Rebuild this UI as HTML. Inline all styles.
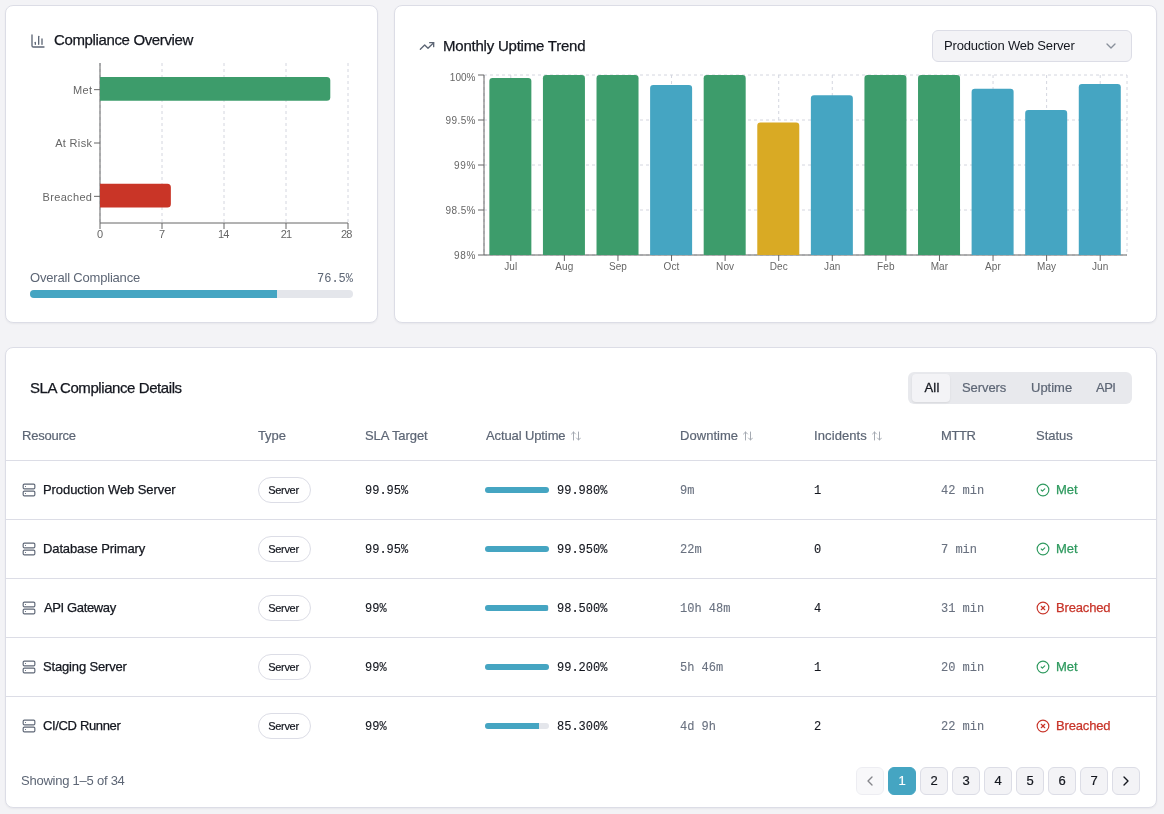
<!DOCTYPE html>
<html lang="en">
<head>
<meta charset="utf-8">
<title>SLA Compliance</title>
<style>
*{box-sizing:border-box;margin:0;padding:0}
html,body{width:1164px;height:814px;overflow:hidden}
body{background:#f3f3f6;font-family:"Liberation Sans",sans-serif;color:#14171f;position:relative}
#root{position:absolute;left:0;top:0;width:1164px;height:814px;will-change:transform}
.mono{font-family:"Liberation Mono",monospace}
.card{position:absolute;background:#fff;border:1px solid #dcdde6;border-radius:8px;box-shadow:0 1px 2px rgba(16,24,40,.05)}
.title{position:absolute;font-size:15px;color:#14171f;white-space:nowrap;line-height:20px;-webkit-text-stroke:.25px #14171f}
svg{position:absolute;overflow:visible}
.tick{font-family:"Liberation Sans",sans-serif;font-size:11px;fill:#666}
.t2{font-size:10px;letter-spacing:.1px}
#c1{left:5px;top:5px;width:373px;height:318px}
#c2{left:394px;top:5px;width:763px;height:318px}
#c3{left:5px;top:347px;width:1152px;height:461px}
.lbl{position:absolute;font-size:13px;color:#5d6675;white-space:nowrap;line-height:16px}
.pbar{position:absolute;height:8px;border-radius:4px;background:#e4e6eb;overflow:hidden}
.pbar i{display:block;height:100%;background:#45a5c2}
.select{position:absolute;left:932px;top:30px;width:200px;height:32px;border:1px solid #dcdde6;border-radius:6px;background:#f3f3f6;font-size:13px;line-height:30px;padding-left:11px;color:#14171f;white-space:nowrap}
.tabs{position:absolute;left:908px;top:372px;width:224px;height:32px;background:#e8e9ed;border-radius:6px}
.tab{position:absolute;top:0;height:32px;line-height:32px;font-size:13px;color:#5d6675;white-space:nowrap;-webkit-text-stroke:.2px #5d6675}
.tab.on{top:2px;height:28px;line-height:28px;background:#f3f3f6;border-radius:4px;color:#14171f;text-align:center;box-shadow:0 1px 2px rgba(0,0,0,.08);-webkit-text-stroke:.3px #14171f}
.th{position:absolute;top:428px;font-size:13px;line-height:16px;color:#5d6675;white-space:nowrap;-webkit-text-stroke:.2px #5d6675}
.hr{position:absolute;left:6px;width:1150px;height:1px;background:#dcdde6}
.row{position:absolute;left:0;width:1164px;height:58px}
.row>*{position:absolute;white-space:nowrap}
.name{left:43px;top:21px;font-size:13px;line-height:16px;color:#14171f;-webkit-text-stroke:.25px #14171f}
.badge{left:258px;top:16px;width:53px;height:26px;border:1px solid #dcdde6;border-radius:13px;font-size:11px;line-height:24px;text-align:center;color:#14171f;background:#fff;padding-right:2px;-webkit-text-stroke:.2px #14171f}
.m{font-family:"Liberation Mono",monospace;font-size:12px;line-height:16px;top:22px;color:#14171f;-webkit-text-stroke:.12px currentColor}
.g{color:#6a7280}
.bar{left:485px;top:26px;width:64px;height:6px;border-radius:3px;background:#e4e6eb;overflow:hidden}
.bar i{display:block;height:100%;background:#45a5c2}
.st{left:1056px;top:21px;font-size:13px;line-height:16px}
.met{color:#2f9a5f;-webkit-text-stroke:.25px #2f9a5f}
.br{color:#c8352a;-webkit-text-stroke:.25px #c8352a}
.pg{position:absolute;top:767px;width:28px;height:28px;border:1px solid #dcdde6;border-radius:6px;background:#f3f3f6;font-size:13px;line-height:26px;text-align:center;color:#14171f;-webkit-text-stroke:.2px #14171f}
.pg.on{background:#45a5c2;border-color:#45a5c2;color:#fff;-webkit-text-stroke:.2px #fff}
.pg.dis{opacity:.5}
</style>
</head>
<body>
<div id="root">
<div class="card" id="c1"></div>
<div class="card" id="c2"></div>
<div class="card" id="c3"></div>
<svg id="charts" width="1164" height="814" viewBox="0 0 1164 814" style="left:0;top:0">
<g stroke="#d4d6df" stroke-dasharray="3 3" fill="none">
<line x1="100.0" y1="63" x2="100.0" y2="223"/>
<line x1="162.0" y1="63" x2="162.0" y2="223"/>
<line x1="224.0" y1="63" x2="224.0" y2="223"/>
<line x1="286.0" y1="63" x2="286.0" y2="223"/>
<line x1="348.0" y1="63" x2="348.0" y2="223"/>
</g>
<g stroke="#666" fill="none"><line x1="100" y1="63" x2="100" y2="223"/><line x1="100" y1="223" x2="348" y2="223"/>
<line x1="94" y1="89.67" x2="100" y2="89.67"/>
<line x1="94" y1="143.00" x2="100" y2="143.00"/>
<line x1="94" y1="196.33" x2="100" y2="196.33"/>
<line x1="100.0" y1="223" x2="100.0" y2="229"/>
<line x1="162.0" y1="223" x2="162.0" y2="229"/>
<line x1="224.0" y1="223" x2="224.0" y2="229"/>
<line x1="286.0" y1="223" x2="286.0" y2="229"/>
<line x1="348.0" y1="223" x2="348.0" y2="229"/>
</g>
<path d="M100,77.00h226.79a3.5,3.5 0 0 1 3.5,3.5v16.75a3.5,3.5 0 0 1 -3.5,3.5h-226.79z" fill="#3d9c6b"/>
<path d="M100,183.67h67.36a3.5,3.5 0 0 1 3.5,3.5v16.75a3.5,3.5 0 0 1 -3.5,3.5h-67.36z" fill="#c93527"/>
<text class="tick" x="92.3" y="93.87" text-anchor="end" style="letter-spacing:.33px">Met</text>
<text class="tick" x="92.3" y="147.20" text-anchor="end" style="letter-spacing:.33px">At Risk</text>
<text class="tick" x="92.3" y="200.53" text-anchor="end" style="letter-spacing:.33px">Breached</text>
<text class="tick" x="100.0" y="238.2" text-anchor="middle">0</text>
<text class="tick" x="162.0" y="238.2" text-anchor="middle">7</text>
<text class="tick" x="223.2" y="238.2" text-anchor="middle" style="letter-spacing:-.9px">14</text>
<text class="tick" x="286.0" y="238.2" text-anchor="middle" style="letter-spacing:-.9px">21</text>
<text class="tick" x="346.2" y="238.2" text-anchor="middle" style="letter-spacing:-.9px">28</text>
<g stroke="#d4d6df" stroke-dasharray="3 3" fill="none">
<line x1="484" y1="75.00" x2="1127" y2="75.00"/>
<line x1="484" y1="120.00" x2="1127" y2="120.00"/>
<line x1="484" y1="165.00" x2="1127" y2="165.00"/>
<line x1="484" y1="210.00" x2="1127" y2="210.00"/>
<line x1="484" y1="255.00" x2="1127" y2="255.00"/>
<line x1="484" y1="75" x2="484" y2="255"/>
<line x1="510.79" y1="75" x2="510.79" y2="255"/>
<line x1="564.38" y1="75" x2="564.38" y2="255"/>
<line x1="617.96" y1="75" x2="617.96" y2="255"/>
<line x1="671.54" y1="75" x2="671.54" y2="255"/>
<line x1="725.12" y1="75" x2="725.12" y2="255"/>
<line x1="778.71" y1="75" x2="778.71" y2="255"/>
<line x1="832.29" y1="75" x2="832.29" y2="255"/>
<line x1="885.88" y1="75" x2="885.88" y2="255"/>
<line x1="939.46" y1="75" x2="939.46" y2="255"/>
<line x1="993.04" y1="75" x2="993.04" y2="255"/>
<line x1="1046.62" y1="75" x2="1046.62" y2="255"/>
<line x1="1100.21" y1="75" x2="1100.21" y2="255"/>
<line x1="1127" y1="75" x2="1127" y2="255"/>
</g>
<g stroke="#666" fill="none"><line x1="484" y1="75" x2="484" y2="255"/><line x1="484" y1="255" x2="1127" y2="255"/>
<line x1="478" y1="75.00" x2="484" y2="75.00"/>
<line x1="478" y1="120.00" x2="484" y2="120.00"/>
<line x1="478" y1="165.00" x2="484" y2="165.00"/>
<line x1="478" y1="210.00" x2="484" y2="210.00"/>
<line x1="478" y1="255.00" x2="484" y2="255.00"/>
<line x1="510.79" y1="255" x2="510.79" y2="261"/>
<line x1="564.38" y1="255" x2="564.38" y2="261"/>
<line x1="617.96" y1="255" x2="617.96" y2="261"/>
<line x1="671.54" y1="255" x2="671.54" y2="261"/>
<line x1="725.12" y1="255" x2="725.12" y2="261"/>
<line x1="778.71" y1="255" x2="778.71" y2="261"/>
<line x1="832.29" y1="255" x2="832.29" y2="261"/>
<line x1="885.88" y1="255" x2="885.88" y2="261"/>
<line x1="939.46" y1="255" x2="939.46" y2="261"/>
<line x1="993.04" y1="255" x2="993.04" y2="261"/>
<line x1="1046.62" y1="255" x2="1046.62" y2="261"/>
<line x1="1100.21" y1="255" x2="1100.21" y2="261"/>
</g>
<path d="M489.36,255v-173.90a3.2,3.2 0 0 1 3.2,-3.2h35.60a3.2,3.2 0 0 1 3.2,3.2v173.90z" fill="#3d9c6b"/>
<path d="M542.94,255v-176.80a3.2,3.2 0 0 1 3.2,-3.2h35.60a3.2,3.2 0 0 1 3.2,3.2v176.80z" fill="#3d9c6b"/>
<path d="M596.52,255v-176.80a3.2,3.2 0 0 1 3.2,-3.2h35.60a3.2,3.2 0 0 1 3.2,3.2v176.80z" fill="#3d9c6b"/>
<path d="M650.11,255v-166.80a3.2,3.2 0 0 1 3.2,-3.2h35.60a3.2,3.2 0 0 1 3.2,3.2v166.80z" fill="#45a5c2"/>
<path d="M703.69,255v-176.80a3.2,3.2 0 0 1 3.2,-3.2h35.60a3.2,3.2 0 0 1 3.2,3.2v176.80z" fill="#3d9c6b"/>
<path d="M757.28,255v-129.30a3.2,3.2 0 0 1 3.2,-3.2h35.60a3.2,3.2 0 0 1 3.2,3.2v129.30z" fill="#d9aa24"/>
<path d="M810.86,255v-156.50a3.2,3.2 0 0 1 3.2,-3.2h35.60a3.2,3.2 0 0 1 3.2,3.2v156.50z" fill="#45a5c2"/>
<path d="M864.44,255v-176.80a3.2,3.2 0 0 1 3.2,-3.2h35.60a3.2,3.2 0 0 1 3.2,3.2v176.80z" fill="#3d9c6b"/>
<path d="M918.03,255v-176.80a3.2,3.2 0 0 1 3.2,-3.2h35.60a3.2,3.2 0 0 1 3.2,3.2v176.80z" fill="#3d9c6b"/>
<path d="M971.61,255v-163.10a3.2,3.2 0 0 1 3.2,-3.2h35.60a3.2,3.2 0 0 1 3.2,3.2v163.10z" fill="#45a5c2"/>
<path d="M1025.19,255v-141.80a3.2,3.2 0 0 1 3.2,-3.2h35.60a3.2,3.2 0 0 1 3.2,3.2v141.80z" fill="#45a5c2"/>
<path d="M1078.78,255v-167.80a3.2,3.2 0 0 1 3.2,-3.2h35.60a3.2,3.2 0 0 1 3.2,3.2v167.80z" fill="#45a5c2"/>
<text class="tick t2" x="475.55" y="81.00" text-anchor="end" style="letter-spacing:0.05px">100%</text>
<text class="tick t2" x="475.90" y="124.30" text-anchor="end" style="letter-spacing:0.4px">99.5%</text>
<text class="tick t2" x="476.20" y="169.30" text-anchor="end" style="letter-spacing:0.7px">99%</text>
<text class="tick t2" x="475.90" y="214.30" text-anchor="end" style="letter-spacing:0.4px">98.5%</text>
<text class="tick t2" x="476.20" y="259.30" text-anchor="end" style="letter-spacing:0.7px">98%</text>
<text class="tick t2" x="510.79" y="270.3" text-anchor="middle">Jul</text>
<text class="tick t2" x="564.38" y="270.3" text-anchor="middle">Aug</text>
<text class="tick t2" x="617.96" y="270.3" text-anchor="middle">Sep</text>
<text class="tick t2" x="671.54" y="270.3" text-anchor="middle">Oct</text>
<text class="tick t2" x="725.12" y="270.3" text-anchor="middle">Nov</text>
<text class="tick t2" x="778.71" y="270.3" text-anchor="middle">Dec</text>
<text class="tick t2" x="832.29" y="270.3" text-anchor="middle">Jan</text>
<text class="tick t2" x="885.88" y="270.3" text-anchor="middle">Feb</text>
<text class="tick t2" x="939.46" y="270.3" text-anchor="middle">Mar</text>
<text class="tick t2" x="993.04" y="270.3" text-anchor="middle">Apr</text>
<text class="tick t2" x="1046.62" y="270.3" text-anchor="middle">May</text>
<text class="tick t2" x="1100.21" y="270.3" text-anchor="middle">Jun</text>
</svg>
<svg width="16" height="16" viewBox="0 0 24 24" style="left:30px;top:32.5px;" fill="none" stroke="#5d6675" stroke-width="2" stroke-linecap="round" stroke-linejoin="round"><path d="M3 3v16a2 2 0 0 0 2 2h16"/><path d="M18 17V9"/><path d="M13 17V5"/><path d="M8 17v-3"/></svg>
<div class="title" style="left:54px;top:30px;letter-spacing:-0.36px;">Compliance Overview</div>
<div class="lbl" style="left:30px;top:270px;letter-spacing:-0.19px;">Overall Compliance</div>
<div class="lbl mono" style="right:811px;top:271px;font-size:12px">76.5%</div>
<div class="pbar" style="left:30px;top:290px;width:323px"><i style="width:247px"></i></div>
<svg width="16" height="16" viewBox="0 0 24 24" style="left:419px;top:38px;" fill="none" stroke="#5d6675" stroke-width="2" stroke-linecap="round" stroke-linejoin="round"><polyline points="22 7 13.5 15.5 8.5 10.5 2 17"/><polyline points="16 7 22 7 22 13"/></svg>
<div class="title" style="left:443px;top:36px;letter-spacing:-0.22px;">Monthly Uptime Trend</div>
<div class="select" style="letter-spacing:-0.17px;">Production Web Server</div>
<svg width="16" height="16" viewBox="0 0 24 24" style="left:1103px;top:38px;opacity:.7" fill="none" stroke="#5d6675" stroke-width="2" stroke-linecap="round" stroke-linejoin="round"><path d="m6 9 6 6 6-6"/></svg>
<div class="title" style="left:30px;top:378px;letter-spacing:-0.42px;">SLA Compliance Details</div>
<div class="tabs"><div class="tab on" style="left:4px;width:38px;padding-left:2px;letter-spacing:0.15px;">All</div><div class="tab" style="left:54px;letter-spacing:-0.08px;">Servers</div><div class="tab" style="left:123px;">Uptime</div><div class="tab" style="left:188px;letter-spacing:-0.5px;">API</div></div>
<div class="th" style="left:22px;letter-spacing:-0.24px;">Resource</div>
<div class="th" style="left:258px;letter-spacing:-0.1px;">Type</div>
<div class="th" style="left:365px;letter-spacing:-0.08px;">SLA Target</div>
<div class="th" style="left:486px;letter-spacing:-0.11px;">Actual Uptime</div>
<svg width="12" height="12" viewBox="0 0 24 24" style="left:570px;top:430px;opacity:.55" fill="none" stroke="#5d6675" stroke-width="2" stroke-linecap="round" stroke-linejoin="round"><path d="m21 16-4 4-4-4"/><path d="M17 20V4"/><path d="m3 8 4-4 4 4"/><path d="M7 4v16"/></svg>
<div class="th" style="left:680px;letter-spacing:0.04px;">Downtime</div>
<svg width="12" height="12" viewBox="0 0 24 24" style="left:742px;top:430px;opacity:.55" fill="none" stroke="#5d6675" stroke-width="2" stroke-linecap="round" stroke-linejoin="round"><path d="m21 16-4 4-4-4"/><path d="M17 20V4"/><path d="m3 8 4-4 4 4"/><path d="M7 4v16"/></svg>
<div class="th" style="left:814px;letter-spacing:0.1px;">Incidents</div>
<svg width="12" height="12" viewBox="0 0 24 24" style="left:871px;top:430px;opacity:.55" fill="none" stroke="#5d6675" stroke-width="2" stroke-linecap="round" stroke-linejoin="round"><path d="m21 16-4 4-4-4"/><path d="M17 20V4"/><path d="m3 8 4-4 4 4"/><path d="M7 4v16"/></svg>
<div class="th" style="left:941px;letter-spacing:-0.37px;">MTTR</div>
<div class="th" style="left:1036px;letter-spacing:-0.02px;">Status</div>
<div class="hr" style="top:460px"></div>
<div class="hr" style="top:519px"></div>
<div class="hr" style="top:578px"></div>
<div class="hr" style="top:637px"></div>
<div class="hr" style="top:696px"></div>
<div class="row" style="top:461px">
<svg width="14" height="14" viewBox="0 0 24 24" style="left:22px;top:22px;" fill="none" stroke="#5d6675" stroke-width="2" stroke-linecap="round" stroke-linejoin="round"><rect width="20" height="8" x="2" y="2" rx="2" ry="2"/><rect width="20" height="8" x="2" y="14" rx="2" ry="2"/><line x1="6" x2="6.01" y1="6" y2="6"/><line x1="6" x2="6.01" y1="18" y2="18"/></svg>
<div class="name" style="letter-spacing:-0.075px;">Production Web Server</div><div class="badge" style="letter-spacing:-0.3px;">Server</div>
<div class="m" style="left:365px">99.95%</div>
<div class="bar"><i style="width:64px"></i></div>
<div class="m" style="left:557px">99.980%</div>
<div class="m g" style="left:680px">9m</div>
<div class="m" style="left:814px">1</div>
<div class="m g" style="left:941px">42 min</div>
<svg width="14" height="14" viewBox="0 0 24 24" style="left:1036px;top:22px;" fill="none" stroke="#2f9a5f" stroke-width="2" stroke-linecap="round" stroke-linejoin="round"><circle cx="12" cy="12" r="10"/><path d="m9 12 2 2 4-4"/></svg>
<div class="st met" style="">Met</div>
</div>
<div class="row" style="top:520px">
<svg width="14" height="14" viewBox="0 0 24 24" style="left:22px;top:22px;" fill="none" stroke="#5d6675" stroke-width="2" stroke-linecap="round" stroke-linejoin="round"><rect width="20" height="8" x="2" y="2" rx="2" ry="2"/><rect width="20" height="8" x="2" y="14" rx="2" ry="2"/><line x1="6" x2="6.01" y1="6" y2="6"/><line x1="6" x2="6.01" y1="18" y2="18"/></svg>
<div class="name" style="letter-spacing:-0.12px;">Database Primary</div><div class="badge" style="letter-spacing:-0.3px;">Server</div>
<div class="m" style="left:365px">99.95%</div>
<div class="bar"><i style="width:64px"></i></div>
<div class="m" style="left:557px">99.950%</div>
<div class="m g" style="left:680px">22m</div>
<div class="m" style="left:814px">0</div>
<div class="m g" style="left:941px">7 min</div>
<svg width="14" height="14" viewBox="0 0 24 24" style="left:1036px;top:22px;" fill="none" stroke="#2f9a5f" stroke-width="2" stroke-linecap="round" stroke-linejoin="round"><circle cx="12" cy="12" r="10"/><path d="m9 12 2 2 4-4"/></svg>
<div class="st met" style="">Met</div>
</div>
<div class="row" style="top:579px">
<svg width="14" height="14" viewBox="0 0 24 24" style="left:22px;top:22px;" fill="none" stroke="#5d6675" stroke-width="2" stroke-linecap="round" stroke-linejoin="round"><rect width="20" height="8" x="2" y="2" rx="2" ry="2"/><rect width="20" height="8" x="2" y="14" rx="2" ry="2"/><line x1="6" x2="6.01" y1="6" y2="6"/><line x1="6" x2="6.01" y1="18" y2="18"/></svg>
<div class="name" style="letter-spacing:-0.37px;left:44px;">API Gateway</div><div class="badge" style="letter-spacing:-0.3px;">Server</div>
<div class="m" style="left:365px">99%</div>
<div class="bar"><i style="width:63px"></i></div>
<div class="m" style="left:557px">98.500%</div>
<div class="m g" style="left:680px">10h 48m</div>
<div class="m" style="left:814px">4</div>
<div class="m g" style="left:941px">31 min</div>
<svg width="14" height="14" viewBox="0 0 24 24" style="left:1036px;top:22px;" fill="none" stroke="#c8352a" stroke-width="2" stroke-linecap="round" stroke-linejoin="round"><circle cx="12" cy="12" r="10"/><path d="m15 9-6 6"/><path d="m9 9 6 6"/></svg>
<div class="st br" style="letter-spacing:-0.15px;">Breached</div>
</div>
<div class="row" style="top:638px">
<svg width="14" height="14" viewBox="0 0 24 24" style="left:22px;top:22px;" fill="none" stroke="#5d6675" stroke-width="2" stroke-linecap="round" stroke-linejoin="round"><rect width="20" height="8" x="2" y="2" rx="2" ry="2"/><rect width="20" height="8" x="2" y="14" rx="2" ry="2"/><line x1="6" x2="6.01" y1="6" y2="6"/><line x1="6" x2="6.01" y1="18" y2="18"/></svg>
<div class="name" style="letter-spacing:-0.16px;">Staging Server</div><div class="badge" style="letter-spacing:-0.3px;">Server</div>
<div class="m" style="left:365px">99%</div>
<div class="bar"><i style="width:63.5px"></i></div>
<div class="m" style="left:557px">99.200%</div>
<div class="m g" style="left:680px">5h 46m</div>
<div class="m" style="left:814px">1</div>
<div class="m g" style="left:941px">20 min</div>
<svg width="14" height="14" viewBox="0 0 24 24" style="left:1036px;top:22px;" fill="none" stroke="#2f9a5f" stroke-width="2" stroke-linecap="round" stroke-linejoin="round"><circle cx="12" cy="12" r="10"/><path d="m9 12 2 2 4-4"/></svg>
<div class="st met" style="">Met</div>
</div>
<div class="row" style="top:697px">
<svg width="14" height="14" viewBox="0 0 24 24" style="left:22px;top:22px;" fill="none" stroke="#5d6675" stroke-width="2" stroke-linecap="round" stroke-linejoin="round"><rect width="20" height="8" x="2" y="2" rx="2" ry="2"/><rect width="20" height="8" x="2" y="14" rx="2" ry="2"/><line x1="6" x2="6.01" y1="6" y2="6"/><line x1="6" x2="6.01" y1="18" y2="18"/></svg>
<div class="name" style="letter-spacing:-0.35px;">CI/CD Runner</div><div class="badge" style="letter-spacing:-0.3px;">Server</div>
<div class="m" style="left:365px">99%</div>
<div class="bar"><i style="width:54px"></i></div>
<div class="m" style="left:557px">85.300%</div>
<div class="m g" style="left:680px">4d 9h</div>
<div class="m" style="left:814px">2</div>
<div class="m g" style="left:941px">22 min</div>
<svg width="14" height="14" viewBox="0 0 24 24" style="left:1036px;top:22px;" fill="none" stroke="#c8352a" stroke-width="2" stroke-linecap="round" stroke-linejoin="round"><circle cx="12" cy="12" r="10"/><path d="m15 9-6 6"/><path d="m9 9 6 6"/></svg>
<div class="st br" style="letter-spacing:-0.15px;">Breached</div>
</div>
<div class="lbl" style="left:21px;top:773px;letter-spacing:-0.24px;">Showing 1&#8211;5 of 34</div>
<div class="pg dis" style="left:856px"></div>
<svg width="16" height="16" viewBox="0 0 24 24" style="left:862px;top:773px;opacity:.5" fill="none" stroke="#14171f" stroke-width="2" stroke-linecap="round" stroke-linejoin="round"><path d="m15 18-6-6 6-6"/></svg>
<div class="pg on" style="left:888px">1</div>
<div class="pg" style="left:920px">2</div>
<div class="pg" style="left:952px">3</div>
<div class="pg" style="left:984px">4</div>
<div class="pg" style="left:1016px">5</div>
<div class="pg" style="left:1048px">6</div>
<div class="pg" style="left:1080px">7</div>
<div class="pg" style="left:1112px"></div>
<svg width="16" height="16" viewBox="0 0 24 24" style="left:1118px;top:773px;" fill="none" stroke="#14171f" stroke-width="2" stroke-linecap="round" stroke-linejoin="round"><path d="m9 18 6-6-6-6"/></svg>
</div>
</body>
</html>
